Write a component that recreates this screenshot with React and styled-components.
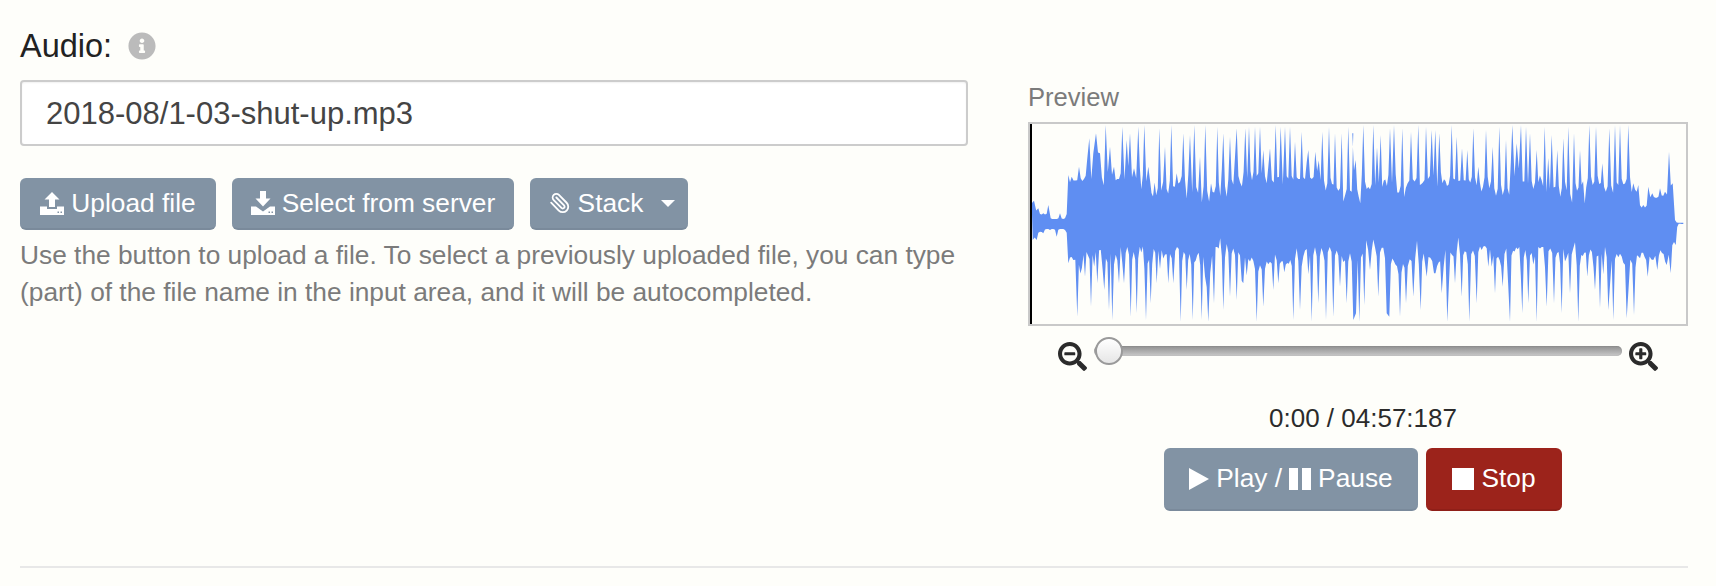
import React, { useMemo } from 'react';
import styled, { createGlobalStyle } from 'styled-components';
import { FaInfoCircle, FaSearchMinus, FaSearchPlus } from 'react-icons/fa';
import { Paperclip } from 'lucide-react';

const GlobalStyle = createGlobalStyle`
    html, body {
        margin: 0;
        height: 100%;
        overflow: hidden;
        background: #fefefa;
        font-family: "Liberation Sans", Arial, sans-serif;
        color: #222;
    }
`;

const Page = styled.div`
    padding: 26px 28px 0 20px;
`;

const Columns = styled.div`
    display: grid;
    grid-template-columns: 948px 660px;
    column-gap: 60px;
    align-items: start;
`;

const LeftColumn = styled.div`
    display: flex;
    flex-direction: column;
`;

const RightColumn = styled.div`
    display: flex;
    flex-direction: column;
    padding-top: 56px;
`;

const LabelRow = styled.div`
    display: flex;
    align-items: center;
    gap: 16px;
    height: 40px;
    font-size: 32.5px;
    color: #222;
    svg {
        width: 28px;
        height: 28px;
        color: #bbb;
    }
`;

const FileInput = styled.input`
    box-sizing: border-box;
    width: 100%;
    height: 66px;
    margin-top: 14px;
    padding: 2px 24px 0;
    border: 2px solid #cccccc;
    border-radius: 4px;
    background: #fff;
    box-shadow: inset 0 1px 2px rgba(0, 0, 0, 0.06);
    font: 31px "Liberation Sans", Arial, sans-serif;
    color: #444;
    outline: none;
`;

const ButtonRow = styled.div`
    display: flex;
    gap: ${(p) => p.$gap || 16}px;
    margin-top: ${(p) => p.$top || 32}px;
    justify-content: ${(p) => p.$center ? 'center' : 'flex-start'};
`;

const Button = styled.button`
    box-sizing: border-box;
    display: inline-flex;
    align-items: center;
    justify-content: center;
    gap: ${(p) => p.$gap || 7}px;
    height: ${(p) => p.$tall ? 63 : 52}px;
    width: ${(p) => p.$width}px;
    padding: 0;
    border: 0;
    border-bottom: 2px solid ${(p) => p.$danger ? '#8f1f18' : '#7a8a9b'};
    border-radius: 6px;
    background: ${(p) => p.$danger ? '#9c231b' : '#8293a4'};
    color: #fff;
    font: 26.3px "Liberation Sans", Arial, sans-serif;
    svg {
        flex: none;
        fill: currentColor;
    }
`;

const ClipIcon = styled(Paperclip)`
    width: 22px;
    height: 26px;
    margin-left: 6px;
    transform: scaleX(-1);
    &&& {
        fill: none;
    }
`;

const Caret = styled.span`
    width: 0;
    height: 0;
    margin-left: 11px;
    border-left: 7px solid transparent;
    border-right: 7px solid transparent;
    border-top: 7px solid #fff;
`;

const HelpText = styled.p`
    margin: 7px 0 0;
    font-size: 26.3px;
    line-height: 37px;
    color: #7b7b7b;
`;

const PreviewTitle = styled.div`
    height: 30px;
    line-height: 30px;
    margin-bottom: 10px;
    font-size: 25.6px;
    color: #7b7b7b;
`;

const WaveBox = styled.div`
    box-sizing: border-box;
    width: 660px;
    height: 204px;
    border: 2px solid #c9c9c9;
    svg {
        display: block;
        width: 656px;
        height: 200px;
    }
`;

const ZoomRow = styled.div`
    display: flex;
    align-items: flex-start;
    gap: 7px;
    width: 600px;
    height: 34px;
    margin: 11px auto 0;
    svg {
        flex: none;
        width: 29px;
        height: 29px;
        margin-top: 5px;
        color: #2b2b2b;
    }
`;

const Track = styled.div`
    position: relative;
    flex: 1;
    height: 10px;
    margin-top: 9px;
    border-radius: 5px;
    background: linear-gradient(#8f8f8f, #c9c9c9);
    box-shadow: inset 0 0 1px rgba(0, 0, 0, 0.3);
`;

const Thumb = styled.div`
    position: absolute;
    left: 1px;
    top: -9px;
    box-sizing: border-box;
    width: 28px;
    height: 28px;
    border: 2px solid #9a9a9a;
    border-radius: 50%;
    background: linear-gradient(#ffffff, #e6e6e6);
`;

const Transport = styled.div`
    padding-left: 10px;
`;

const TimeText = styled.div`
    margin-top: 31px;
    line-height: 32px;
    font-size: 26px;
    text-align: center;
    color: #2b2b2b;
`;

const Divider = styled.hr`
    height: 2px;
    margin: 55px 0 0;
    border: 0;
    background: #e8e8e8;
`;

// peak positions read from the reference, [x, y] per 350px wide section
const TOP_A = [[65,400],[72,392],[85,415],[100,430],[115,405],[122,445],[150,430],[165,445],[175,315],[185,320],[207,290],[232,265],[238,205],[250,250],[258,190],[270,250],[287,165],[300,230],[312,290],[337,170],[350,210],[360,190],[372,295],[385,170],[403,165],[415,290],[448,175],[465,230],[484,165],[500,310],[520,190],[540,195],[553,165],[570,260],[586,165],[603,340],[622,170],[640,190],[660,200],[680,175],[706,175],[717,170],[735,170],[750,170],[760,240],[780,235],[797,165],[812,170],[825,170],[840,170],[855,215],[875,185],[895,240],[916,245],[937,185],[957,170],[975,190],[995,190],[1015,170],[1030,190]];
const BOTTOM_A = [[68,510],[80,510],[100,490],[120,480],[140,500],[165,480],[175,580],[190,570],[202,740],[225,620],[243,710],[262,640],[283,660],[297,720],[307,750],[327,640],[342,640],[362,740],[380,730],[408,750],[422,700],[440,640],[475,640],[490,640],[512,755],[530,660],[548,750],[575,750],[595,755],[612,700],[640,720],[660,680],[680,690],[700,640],[740,755],[760,710],[790,660],[805,640],[850,750],[870,720],[905,755],[925,700],[948,750],[970,740],[990,650],[1010,700],[1030,750]];
const TOP_B = [[7,190],[17,270],[40,165],[70,165],[92,195],[120,175],[132,165],[157,175],[183,185],[205,165],[228,170],[245,180],[256,180],[268,190],[305,165],[320,200],[336,235],[352,240],[370,175],[385,290],[408,180],[428,230],[448,170],[468,210],[487,165],[500,220],[513,165],[528,170],[540,190],[560,240],[584,170],[605,195],[622,240],[640,205],[655,170],[672,190],[690,240],[718,165],[738,170],[757,280],[778,175],[795,165],[810,165],[835,165],[850,340],[865,345],[880,405],[895,350],[907,370],[930,355],[945,365],[957,245],[968,340],[975,450],[1000,458]];
const BOTTOM_B = [[18,730],[28,755],[43,705],[60,600],[85,680],[110,730],[118,740],[150,740],[168,700],[190,680],[212,720],[230,620],[252,610],[275,670],[292,755],[315,640],[335,680],[358,755],[380,700],[395,540],[415,590],[435,670],[458,650],[480,755],[517,730],[535,700],[560,755],[590,710],[612,700],[635,730],[660,670],[685,755],[712,620],[735,660],[750,715],[775,720],[790,750],[830,745],[852,735],[870,565],[893,620],[910,570],[922,600],[950,585],[962,610],[977,525],[1000,462]];

const CENTER = 223;

const toPage = (list, left) => list.map(([x, y]) => [left + x / 3, 70 + y / 3]);

// Walks along the peaks: a wandering body with small spikes and notches between the read peaks
const sidePoints = (peaks, sign, seed) => {
    let s = seed;
    const rand = () => {
        s = (s * 16807) % 2147483647;
        return s / 2147483647;
    };
    let wander = 36;
    const points = [];
    peaks.forEach(([x, y], i) => {
        points.push([x, y]);
        const next = peaks[i + 1];
        if (!next) return;
        const ampA = Math.abs(y - CENTER);
        const ampB = Math.abs(next[1] - CENTER);
        const limit = Math.min(ampA, ampB);
        const steps = Math.max(1, Math.floor((next[0] - x) / 1.5));
        const low = limit < 34 ? limit * 0.85 : 0;
        for (let k = 1; k < steps; k++) {
            const px = x + ((next[0] - x) * k) / steps;
            wander += (rand() - 0.5) * 9;
            wander = Math.max(24, Math.min(44, wander));
            let body = low || wander;
            const roll = rand();
            if (!low && roll > 0.72) body += rand() * rand() * 42;
            else if (!low && roll < 0.1) body -= rand() * 14;
            body = Math.min(body, limit);
            const footA = Math.pow(Math.max(0, 1 - (px - x) / 2.5), 2);
            const footB = Math.pow(Math.max(0, 1 - (next[0] - px) / 2.5), 2);
            const amp = Math.max(body + (ampA - body) * footA, body + (ampB - body) * footB);
            points.push([px, CENTER + sign * amp]);
        }
    });
    return points;
};

const Waveform = () => {
    const d = useMemo(() => {
        const top = sidePoints([...toPage(TOP_A, 1010), ...toPage(TOP_B, 1350)], -1, 4711);
        const bottom = sidePoints([...toPage(BOTTOM_A, 1010), ...toPage(BOTTOM_B, 1350)], 1, 9173);
        const all = [...top, ...bottom.reverse()];
        return 'M' + all.map(([x, y]) => `${x.toFixed(1)} ${y.toFixed(1)}`).join('L') + 'Z';
    }, []);

    return (
        <svg viewBox="1030 124 656 200">
            <path d={d} fill="#5f8ef2" />
            <rect x="1030" y="124" width="2" height="200" fill="#000" />
        </svg>
    );
};

const UploadIcon = () => (
    <svg width="24" height="24" viewBox="0 0 24 24">
        <path d="M12 1l7.500 7.500H15V16H9V8.500H4.500zM0 15.500h7V18h10v-2.500h7V24H0zM17.500 20.500v1.500h1.500v-1.500zM20.500 20.500v1.500H22v-1.500z" fillRule="evenodd" />
    </svg>
);

const DownloadIcon = () => (
    <svg width="24" height="24" viewBox="0 0 24 24">
        <path d="M9 0h6v7.500h4.500L12 15.500 4.500 7.500H9zM0 15.500h5l7 5 7-5h5V24H0zM17.500 20.500v1.500h1.500v-1.500zM20.500 20.500v1.500H22v-1.500z" fillRule="evenodd" />
    </svg>
);

const PlayIcon = () => (
    <svg width="20" height="22" viewBox="0 0 20 22"><path d="M0 0l20 11L0 22z" /></svg>
);

const PauseIcon = () => (
    <svg width="22" height="22" viewBox="0 0 22 22"><path d="M0 0h9v22H0zM13 0h9v22h-9z" /></svg>
);

const StopIcon = () => (
    <svg width="22" height="22" viewBox="0 0 22 22"><path d="M0 0h22v22H0z" /></svg>
);

const App = () => {
    return (
        <Page>
            <GlobalStyle />
            <Columns>
                <LeftColumn>
                    <LabelRow>
                        Audio:
                        <FaInfoCircle />
                    </LabelRow>
                    <FileInput type="text" defaultValue="2018-08/1-03-shut-up.mp3" />
                    <ButtonRow>
                        <Button $width={196}><UploadIcon />Upload file</Button>
                        <Button $width={282}><DownloadIcon />Select from server</Button>
                        <Button $width={158}><ClipIcon />Stack<Caret /></Button>
                    </ButtonRow>
                    <HelpText>
                        Use the button to upload a file. To select a previously uploaded file, you can type<br />
                        (part) of the file name in the input area, and it will be autocompleted.
                    </HelpText>
                </LeftColumn>
                <RightColumn>
                    <PreviewTitle>Preview</PreviewTitle>
                    <WaveBox><Waveform /></WaveBox>
                    <ZoomRow>
                        <FaSearchMinus />
                        <Track><Thumb /></Track>
                        <FaSearchPlus />
                    </ZoomRow>
                    <Transport>
                        <TimeText>0:00 / 04:57:187</TimeText>
                        <ButtonRow $center $gap={8} $top={14}>
                            <Button $tall $width={254}><PlayIcon />Play /<PauseIcon />Pause</Button>
                            <Button $tall $danger $width={136}><StopIcon />Stop</Button>
                        </ButtonRow>
                    </Transport>
                </RightColumn>
            </Columns>
            <Divider />
        </Page>
    );
};

export default App;
